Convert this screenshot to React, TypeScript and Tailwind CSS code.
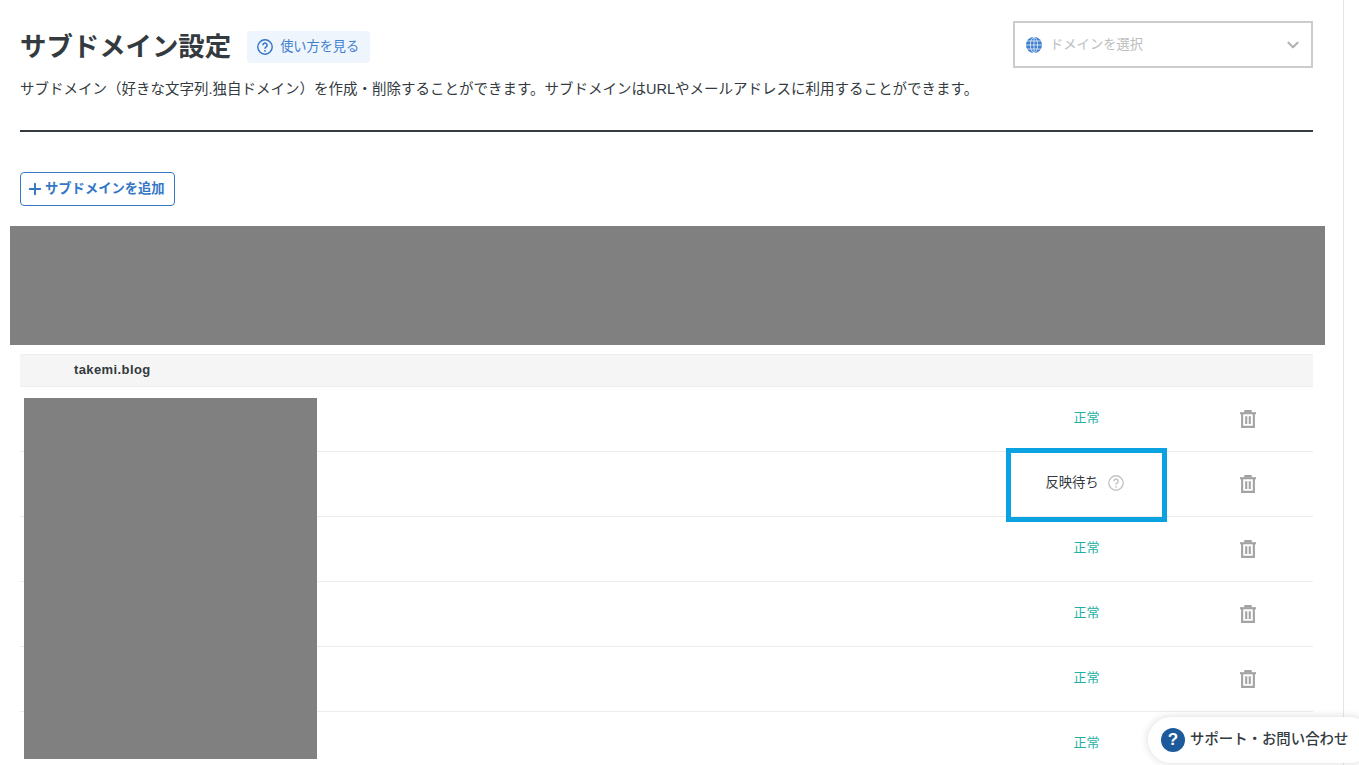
import { ChevronDown, Plus } from "lucide-react";

const rows = ["正常", "反映待ち", "正常", "正常", "正常", "正常"];

function TrashIcon() {
  return (
    <svg width="16" height="18" viewBox="0 0 18 20" fill="none" stroke="#a3a3a3" strokeWidth="2.4">
      <path d="M0 3.5h18" />
      <path d="M6 3V1.2h6V3" />
      <path d="M2.4 4v14.8h13.2V4" />
      <path d="M7 7v8.5M11 7v8.5" />
    </svg>
  );
}

function QuestionIcon({ color, size }: { color: string; size: number }) {
  return (
    <svg width={size} height={size} viewBox="0 0 16 16" fill="none" stroke={color} strokeWidth="1.4">
      <circle cx="8" cy="8" r="7.2" />
      <path d="M5.9 6.2a2.1 2.1 0 1 1 3.3 1.7c-.8.5-1.2.9-1.2 1.8" strokeWidth="1.5" />
      <circle cx="8" cy="11.8" r=".9" fill={color} stroke="none" />
    </svg>
  );
}

function GlobeIcon() {
  return (
    <svg width="16" height="16" viewBox="0 0 16 16" fill="#3f7fcf" stroke="#ffffff" strokeWidth=".7">
      <circle cx="8" cy="8" r="8" stroke="none" />
      <ellipse cx="8" cy="8" rx="3.6" ry="7.6" fill="none" />
      <path d="M8 0v16M0 8h16M1.2 4h13.6M1.2 12h13.6" fill="none" />
    </svg>
  );
}

export default function App() {
  return (
    <div
      className="relative h-[765px] w-[1359px] overflow-hidden bg-white text-[#333a40]"
      style={{ fontFamily: '"Liberation Sans", "Noto Sans CJK JP", sans-serif' }}
    >
      <div className="h-full w-[1344px] border-r border-[#e6e6e6] pt-[21px] pr-[30px] pl-5">
        <div className="flex h-[47px] items-start justify-between">
          <div className="flex items-center pt-[10px]">
            <h1 className="text-[26.4px] leading-[32px] font-bold">サブドメイン設定</h1>
            <a className="ml-4 flex h-8 w-[123px] items-center gap-[7px] rounded bg-[#eff5fc] pl-[10px] text-[13.2px] text-[#3f7fcf]">
              <QuestionIcon color="#2f74c8" size={16} />
              使い方を見る
            </a>
          </div>
          <div className="flex h-[47px] w-[300px] items-center border-2 border-[#cccccc] pr-[9px] pl-[11px]">
            <GlobeIcon />
            <span className="ml-2 flex-1 pt-[1px] text-[13.3px] text-[#bdbdbd]">ドメインを選択</span>
            <ChevronDown size={18} strokeWidth={3} className="text-[#b5b5b5]" />
          </div>
        </div>

        <p className="mt-[11px] text-[14.5px] leading-5">
          サブドメイン（好きな文字列.独自ドメイン）を作成・削除することができます。サブドメインはURLやメールアドレスに利用することができます。
        </p>

        <hr className="mt-[31px] border-t-2 border-[#333a40]" />

        <button className="mt-10 flex h-[34px] w-[155px] items-center rounded border border-[#3577c5] pl-[5px] text-[13.3px] font-bold text-[#3577c5]">
          <Plus size={18} strokeWidth={2.6} className="mr-[1px]" />
          サブドメインを追加
        </button>

        <div className="-mx-[10px] mt-5 h-[119px] w-[1315px] bg-[#808080]" />

        <div className="relative mt-[9px] w-[1293px]">
          <div className="flex h-[33px] items-center border-y border-[#eeeeee] bg-[#f5f5f5] pb-[1px] pl-[54px] text-[13px] font-bold tracking-[0.4px]">
            takemi.blog
          </div>
          {rows.map((status, i) => (
            <div key={i} className="grid h-[65px] grid-cols-[986px_161px_1fr] border-b border-[#ececec]">
              <div />
              <div className="relative flex items-center justify-center pb-[3px]">
                {status === "正常" ? (
                  <span className="text-[13px] text-[#23b0a4]">{status}</span>
                ) : (
                  <>
                    <span className="-ml-[4px] flex items-center gap-[9px] text-[13.3px]">
                      {status}
                      <QuestionIcon color="#c4c4c4" size={16} />
                    </span>
                    <div className="absolute -top-[4px] left-0 h-[74px] w-[161px] border-[5px] border-[#0ba2e2]" />
                  </>
                )}
              </div>
              <div className="flex items-center justify-center pl-4">
                <TrashIcon />
              </div>
            </div>
          ))}
          <div className="absolute top-[44px] left-1 h-[361px] w-[293px] bg-[#808080]" />
        </div>
      </div>

      <div className="absolute top-[717px] left-[1148px] flex h-[46px] w-[225px] items-center rounded-full bg-white pl-[13px] text-[14.4px] font-medium shadow-[0_0_8px_rgba(0,0,0,0.15)]">
        <span className="mr-[5px] flex h-6 w-6 items-center justify-center rounded-full bg-[#1c5a9c] text-[17px] font-bold text-white">
          ?
        </span>
        <span className="pb-[1px]">サポート・お問い合わせ</span>
      </div>
    </div>
  );
}
